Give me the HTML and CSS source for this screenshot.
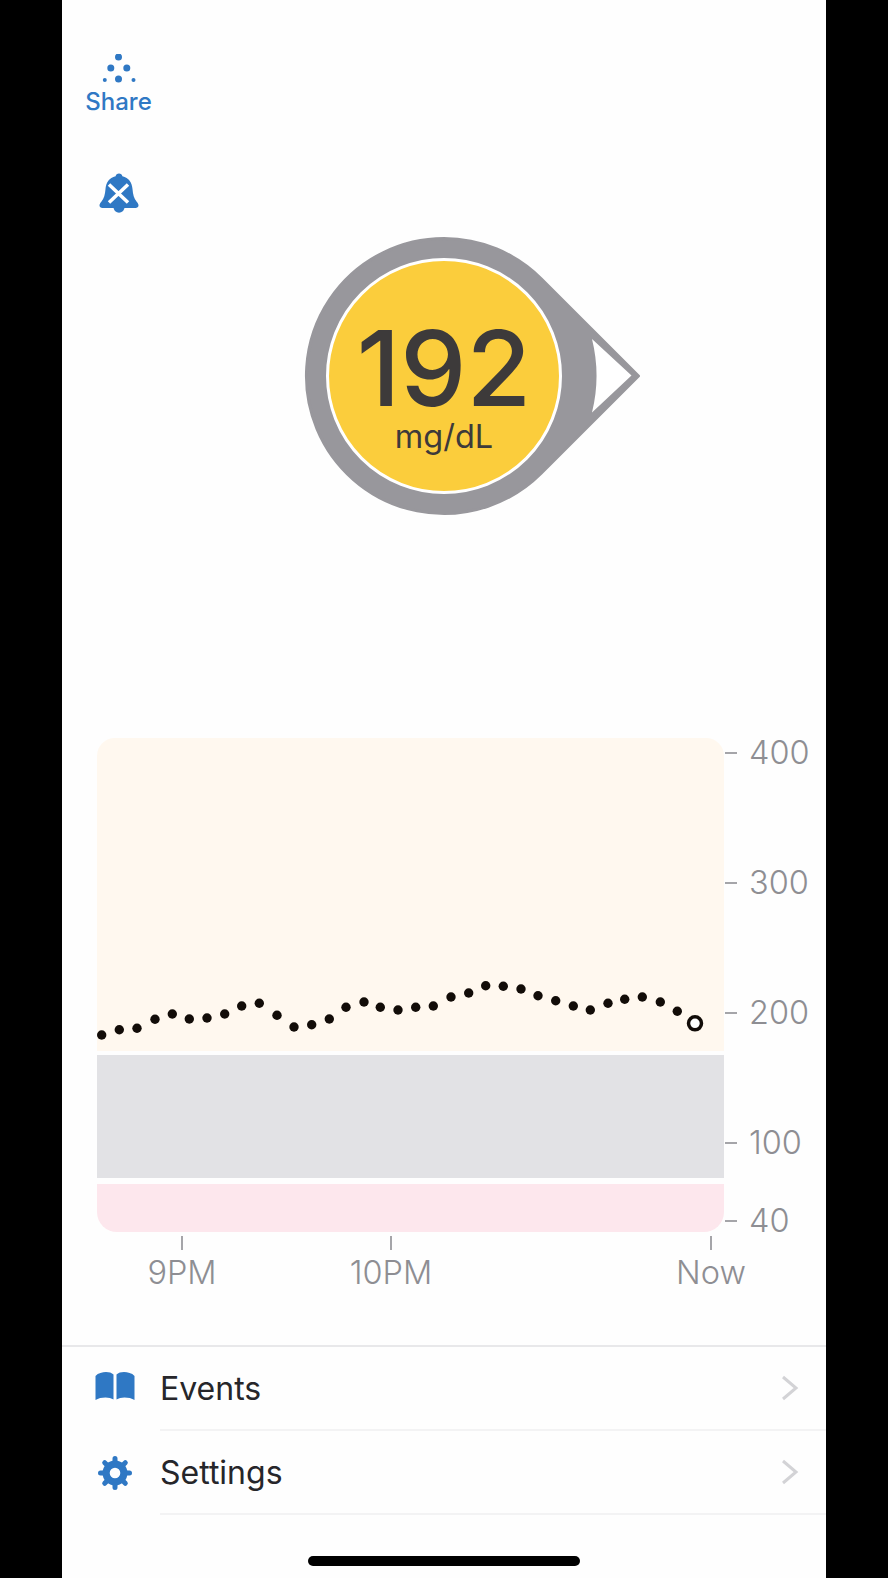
FILE: index.html
```html
<!DOCTYPE html>
<html lang="en">
<head>
    <meta charset="UTF-8">
    <meta name="viewport" content="width=device-width, initial-scale=1.0">
    <title>Glucose</title>
    <link rel="stylesheet" href="styles.css">
</head>
<body>
    <div class="phone">
        <div class="top-btns">
            <div class="share-btn">
                <svg class="share-icon" width="40" height="30" viewBox="0 0 40 30">
                    <circle cx="19.500" cy="3" r="3.500"/>
                    <circle cx="11.800" cy="14" r="3.500"/>
                    <circle cx="27.800" cy="14" r="3.500"/>
                    <circle cx="19.500" cy="25" r="3.500"/>
                    <circle cx="5.800" cy="26" r="2"/>
                    <circle cx="34.500" cy="26" r="2"/>
                </svg>
                <span class="share-label">Share</span>
            </div>
            <svg class="bell-icon" width="40" height="40" viewBox="0 0 40 40">
                <path d="M20 .5c1.800 0 3 1.100 3.400 2.700C29.800 4.800 33 9.500 33.500 16c.4 5.500 1.500 9.500 4 12.500 1.200 1.500 2 2.800 2 4 0 1.500-1.300 2.500-3 2.500H3.500c-1.700 0-3-1-3-2.500 0-1.200.8-2.500 2-4 2.500-3 3.600-7 4-12.500C7 9.500 10.200 4.800 16.600 3.200 17 1.600 18.200.5 20 .5z"/>
                <path d="M14.500 34.500h11c-.3 3-2.700 5.200-5.500 5.200s-5.200-2.200-5.500-5.200z"/>
                <path class="bell-x" d="M10 11.500l19 18M29 11.500l-19 18"/>
            </svg>
        </div>

        <div class="glucose">
            <svg width="340" height="280" viewBox="0 0 340 280">
                <path class="drop" d="M140 2.500A137.500 137.500 0 0 1 237.200 42.800L334.500 140 237.200 237.200A137.500 137.500 0 1 1 140 2.500z"/>
                <path class="drop-notch" d="M288 103L327.500 139.500 288 176.500A153 153 0 0 0 288 103z"/>
                <circle class="dial" cx="140" cy="140" r="116.500"/>
            </svg>
            <div class="reading">
                <div class="reading-value">192</div>
                <div class="reading-unit">mg/dL</div>
            </div>
        </div>

        <div class="chart">
            <div class="plot">
                <div class="band band-high"></div>
                <div class="band band-target"></div>
                <div class="band band-low"></div>
                <svg class="dots" width="627" height="494" viewBox="97 738 627 494">
                    <g>
                        <circle cx="101.700" cy="1035" r="4.700"/>
                        <circle cx="119.300" cy="1029.700" r="4.700"/>
                        <circle cx="137" cy="1028.300" r="4.700"/>
                        <circle cx="155" cy="1019.300" r="4.700"/>
                        <circle cx="172.300" cy="1014" r="4.700"/>
                        <circle cx="189.300" cy="1019" r="4.700"/>
                        <circle cx="207" cy="1018" r="4.700"/>
                        <circle cx="224.700" cy="1014" r="4.700"/>
                        <circle cx="241.700" cy="1006" r="4.700"/>
                        <circle cx="259.300" cy="1003.300" r="4.700"/>
                        <circle cx="277" cy="1015.300" r="4.700"/>
                        <circle cx="294" cy="1027" r="4.700"/>
                        <circle cx="311.700" cy="1024.700" r="4.700"/>
                        <circle cx="329.300" cy="1019" r="4.700"/>
                        <circle cx="346" cy="1007.300" r="4.700"/>
                        <circle cx="364" cy="1002" r="4.700"/>
                        <circle cx="380.300" cy="1007.300" r="4.700"/>
                        <circle cx="398" cy="1010" r="4.700"/>
                        <circle cx="415.700" cy="1007.300" r="4.700"/>
                        <circle cx="433.300" cy="1006" r="4.700"/>
                        <circle cx="451" cy="997" r="4.700"/>
                        <circle cx="468.700" cy="993" r="4.700"/>
                        <circle cx="485.700" cy="985.700" r="4.700"/>
                        <circle cx="503.300" cy="986.300" r="4.700"/>
                        <circle cx="521" cy="989" r="4.700"/>
                        <circle cx="538" cy="995.700" r="4.700"/>
                        <circle cx="555.700" cy="1000.700" r="4.700"/>
                        <circle cx="573.300" cy="1006" r="4.700"/>
                        <circle cx="590.300" cy="1010" r="4.700"/>
                        <circle cx="608" cy="1003.300" r="4.700"/>
                        <circle cx="624.700" cy="999.300" r="4.700"/>
                        <circle cx="642.300" cy="997" r="4.700"/>
                        <circle cx="660.300" cy="1002" r="4.700"/>
                        <circle cx="677.300" cy="1011.300" r="4.700"/>
                    </g>
                    <circle class="dot-now" cx="695" cy="1023.300" r="6.500"/>
                </svg>
            </div>
            <div class="y-axis">
                <div class="y-tick">400</div>
                <div class="y-tick">300</div>
                <div class="y-tick">200</div>
                <div class="y-tick">100</div>
                <div class="y-tick y-tick-low">40</div>
            </div>
        </div>

        <div class="x-axis">
            <div class="x-tick x-tick-9">9PM</div>
            <div class="x-tick x-tick-10">10PM</div>
            <div class="x-tick x-tick-now">Now</div>
        </div>

        <div class="menu">
            <div class="menu-row">
                <div class="menu-icon">
                    <svg class="book" width="40" height="29" viewBox="0 0 40 29">
                        <path d="M.5 4C3 1 7.500 0 11 0c3 0 5.800.8 7.500 2.500V27.500c-2-1.300-5-2-8-2-3.700 0-7.300.8-10 2.500z"/>
                        <path d="M39.500 4C37 1 32.500 0 29 0c-3 0-5.800.8-7.500 2.500V27.500c2-1.300 5-2 8-2 3.700 0 7.300.8 10 2.500z"/>
                    </svg>
                </div>
                <div class="menu-body">
                    <span>Events</span>
                    <svg class="chevron" width="18" height="26" viewBox="0 0 18 26"><path d="M2 2l13 11L2 24"/></svg>
                </div>
            </div>
            <div class="menu-row">
                <div class="menu-icon">
                    <svg class="gear" width="34" height="34" viewBox="0 0 34 34">
                        <circle class="gear-ring" cx="17" cy="17" r="8.900"/>
                        <path class="gear-teeth" d="M17 5V2.500M17 29v2.500M5 17H2.500M29 17h2.500M8.500 8.500L6.700 6.700M25.500 8.500L27.300 6.700M8.500 25.500L6.700 27.300M25.500 25.500L27.300 27.300"/>
                    </svg>
                </div>
                <div class="menu-body">
                    <span>Settings</span>
                    <svg class="chevron" width="18" height="26" viewBox="0 0 18 26"><path d="M2 2l13 11L2 24"/></svg>
                </div>
            </div>
        </div>

        <div class="home-bar"></div>
    </div>
</body>
</html>
```

FILE: styles.css
```css
html, body {
    margin: 0;
    height: 1578px;
    overflow: hidden;
    background: #000;
}
body {
    font-family: Inter, "Liberation Sans", sans-serif;
}
.phone {
    width: 764px;
    height: 1578px;
    margin-left: 62px;
    padding-top: 54px;
    box-sizing: border-box;
    background: #fefefe;
}
.top-btns {
    width: 113px;
    display: flex;
    flex-direction: column;
    align-items: center;
}
.share-btn {
    display: flex;
    flex-direction: column;
    align-items: center;
}
.share-icon {
    display: block;
    fill: #2f78c4;
}
.share-label {
    font-size: 24px;
    line-height: 26px;
    margin-top: 5px;
    font-weight: 500;
    color: #2f78c4;
}
.bell-icon {
    display: block;
    margin-top: 58px;
    fill: #2f78c4;
}
.bell-x {
    fill: none;
    stroke: #fff;
    stroke-width: 3.500;
}
.glucose {
    position: relative;
    width: 340px;
    height: 280px;
    margin: 23px 0 0 242px;
}
.glucose svg {
    display: block;
}
.drop {
    fill: #98979c;
    stroke: #98979c;
    stroke-linejoin: round;
    stroke-width: 3;
}
.drop-notch {
    fill: #fff;
}
.dial {
    fill: #fbcd3c;
    stroke: #fff;
    stroke-width: 3;
}
.reading {
    position: absolute;
    left: 0;
    top: 0;
    width: 280px;
    padding-top: 82px;
    text-align: center;
    color: #3d3a3a;
}
.reading-value {
    font-size: 105px;
    line-height: 100px;
    font-weight: 550;
}
.reading-unit {
    font-size: 32.500px;
    line-height: 36px;
    margin-top: 1px;
}
.chart {
    display: flex;
    margin: 222px 0 0 35px;
}
.plot {
    position: relative;
    width: 627px;
    height: 494px;
    display: flex;
    flex-direction: column;
}
.band-high {
    height: 313px;
    background: #fff8ef;
    border-radius: 18px 18px 0 0;
}
.band-target {
    height: 123px;
    margin-top: 4px;
    background: #e2e2e5;
}
.band-low {
    height: 48px;
    margin-top: 6px;
    background: #fde7ed;
    border-radius: 0 0 20px 20px;
}
.dots {
    position: absolute;
    left: 0;
    top: 0;
    fill: #120c08;
}
.dot-now {
    fill: #fff;
    stroke: #120c08;
    stroke-width: 3.500;
}
.y-axis {
    display: flex;
    flex-direction: column;
    gap: 100px;
}
.y-tick {
    height: 30px;
    line-height: 30px;
    font-size: 32.500px;
    font-weight: 300;
    color: #8e8e93;
    display: flex;
    align-items: center;
    gap: 12px;
}
.y-tick::before {
    content: "";
    width: 12px;
    height: 2px;
    margin-left: 1px;
    background: #a5a5a9;
}
.y-tick-low {
    margin-top: -52px;
}
.x-axis {
    display: flex;
}
.x-tick {
    width: 120px;
    text-align: center;
    font-size: 32.500px;
    line-height: 34px;
    font-weight: 300;
    color: #8e8e93;
}
.x-tick::before {
    content: "";
    display: block;
    width: 2px;
    height: 14px;
    margin: 0 auto 6px;
    background: #a5a5a9;
}
.x-tick-9 {
    margin-left: 60px;
}
.x-tick-10 {
    margin-left: 89px;
}
.x-tick-now {
    margin-left: 200px;
}
.menu {
    margin-top: 55px;
    border-top: 2px solid #e8e8ea;
}
.menu-row {
    display: flex;
    height: 84px;
}
.menu-icon {
    width: 98px;
    padding-left: 33px;
    box-sizing: border-box;
    display: flex;
    align-items: center;
}
.menu-icon svg {
    fill: #2f78c4;
}
.book {
    margin-bottom: 6px;
}
.menu-row + .menu-row .menu-icon {
    padding-left: 36px;
}
.gear-ring {
    fill: none;
    stroke: #2f78c4;
    stroke-width: 7.200;
}
.gear-teeth {
    fill: none;
    stroke: #2f78c4;
    stroke-width: 5;
    stroke-linecap: round;
}
.menu-body {
    flex: 1;
    display: flex;
    align-items: center;
    justify-content: space-between;
    padding-right: 27px;
    border-bottom: 2px solid #f3f3f4;
    font-size: 32px;
    color: #26262a;
}
.chevron {
    fill: none;
    stroke: #d3d3d6;
    stroke-width: 3;
}
.home-bar {
    width: 272px;
    height: 10px;
    margin: 41px 0 0 246px;
    border-radius: 5px;
    background: #000;
}
```
